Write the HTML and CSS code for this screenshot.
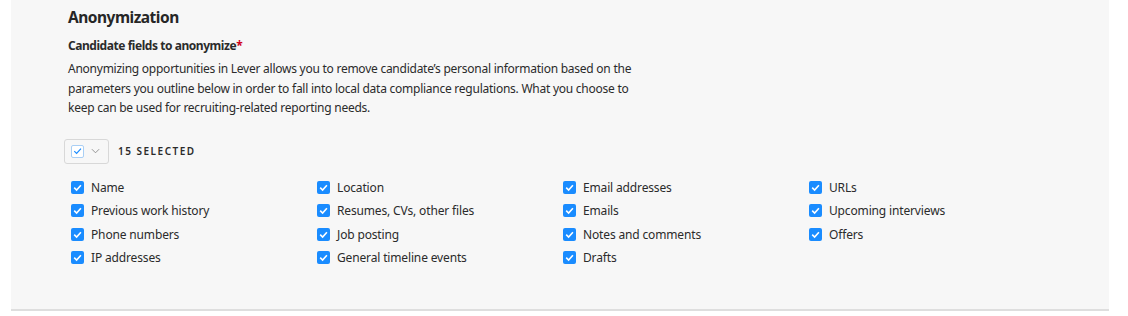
FILE: index.html
```html
<!DOCTYPE html>
<html>
<head>
<meta charset="utf-8">
<link rel="stylesheet" href="styles.css">
</head>
<body>
<section class="panel">
  <h2 class="title">Anonymization</h2>
  <h3 class="label">Candidate fields to anonymize<span class="req">*</span></h3>
  <p class="desc">Anonymizing opportunities in Lever allows you to remove candidate’s personal information based on the parameters you outline below in order to fall into local data compliance regulations. What you choose to keep can be used for recruiting-related reporting needs.</p>
  <div class="bulk">
    <div class="bulk-btn">
      <span class="mini-box"><svg viewBox="0 0 12 12" width="12" height="12"><path d="M2.5 6.2 L5 8.6 L9.8 3.4" fill="none" stroke="#1a8cff" stroke-width="1.3"/></svg></span>
      <svg class="caret" viewBox="0 0 10 6" width="9" height="6"><path d="M1 1 L5 5 L9 1" fill="none" stroke="#8a8a8a" stroke-width="1"/></svg>
    </div>
    <span class="count">15 SELECTED</span>
  </div>
  <div class="grid">
    <label class="item"><svg class="cb" viewBox="0 0 13 13"><rect width="13" height="13" rx="2"/><path d="M3.2 6.7 L5.6 9 L9.9 4.3"/></svg>Name</label>
    <label class="item"><svg class="cb" viewBox="0 0 13 13"><rect width="13" height="13" rx="2"/><path d="M3.2 6.7 L5.6 9 L9.9 4.3"/></svg>Location</label>
    <label class="item"><svg class="cb" viewBox="0 0 13 13"><rect width="13" height="13" rx="2"/><path d="M3.2 6.7 L5.6 9 L9.9 4.3"/></svg>Email addresses</label>
    <label class="item"><svg class="cb" viewBox="0 0 13 13"><rect width="13" height="13" rx="2"/><path d="M3.2 6.7 L5.6 9 L9.9 4.3"/></svg>URLs</label>
    <label class="item"><svg class="cb" viewBox="0 0 13 13"><rect width="13" height="13" rx="2"/><path d="M3.2 6.7 L5.6 9 L9.9 4.3"/></svg>Previous work history</label>
    <label class="item"><svg class="cb" viewBox="0 0 13 13"><rect width="13" height="13" rx="2"/><path d="M3.2 6.7 L5.6 9 L9.9 4.3"/></svg>Resumes, CVs, other files</label>
    <label class="item"><svg class="cb" viewBox="0 0 13 13"><rect width="13" height="13" rx="2"/><path d="M3.2 6.7 L5.6 9 L9.9 4.3"/></svg>Emails</label>
    <label class="item"><svg class="cb" viewBox="0 0 13 13"><rect width="13" height="13" rx="2"/><path d="M3.2 6.7 L5.6 9 L9.9 4.3"/></svg>Upcoming interviews</label>
    <label class="item"><svg class="cb" viewBox="0 0 13 13"><rect width="13" height="13" rx="2"/><path d="M3.2 6.7 L5.6 9 L9.9 4.3"/></svg>Phone numbers</label>
    <label class="item"><svg class="cb" viewBox="0 0 13 13"><rect width="13" height="13" rx="2"/><path d="M3.2 6.7 L5.6 9 L9.9 4.3"/></svg>Job posting</label>
    <label class="item"><svg class="cb" viewBox="0 0 13 13"><rect width="13" height="13" rx="2"/><path d="M3.2 6.7 L5.6 9 L9.9 4.3"/></svg>Notes and comments</label>
    <label class="item"><svg class="cb" viewBox="0 0 13 13"><rect width="13" height="13" rx="2"/><path d="M3.2 6.7 L5.6 9 L9.9 4.3"/></svg>Offers</label>
    <label class="item"><svg class="cb" viewBox="0 0 13 13"><rect width="13" height="13" rx="2"/><path d="M3.2 6.7 L5.6 9 L9.9 4.3"/></svg>IP addresses</label>
    <label class="item"><svg class="cb" viewBox="0 0 13 13"><rect width="13" height="13" rx="2"/><path d="M3.2 6.7 L5.6 9 L9.9 4.3"/></svg>General timeline events</label>
    <label class="item"><svg class="cb" viewBox="0 0 13 13"><rect width="13" height="13" rx="2"/><path d="M3.2 6.7 L5.6 9 L9.9 4.3"/></svg>Drafts</label>
  </div>
</section>
</body>
</html>
```

FILE: styles.css
```css
* { box-sizing: border-box; }
html, body { margin: 0; padding: 0; background: #ffffff; }
body {
  font-family: "Noto Sans", "Open Sans", sans-serif;
  color: #2b2b2b;
  padding: 0 19px 0 11px;
}
.panel {
  background: #f7f7f7;
  border-bottom: 2px solid #dedede;
  padding: 6px 57px 42px 57px;
  height: 311px;
}
.title {
  margin: 0;
  font-size: 15.5px;
  font-weight: 700;
  line-height: 22px;
  color: #262626;
  letter-spacing: -0.5px;
}
.label {
  margin: 10px 0 0;
  font-size: 12px;
  font-weight: 700;
  line-height: 16px;
  letter-spacing: -0.45px;
}
.req { color: #d0021b; }
.desc {
  margin: 5px 0 0;
  width: 580px;
  font-size: 12px;
  line-height: 19.5px;
  letter-spacing: -0.25px;
}
.bulk {
  display: flex;
  align-items: center;
  gap: 9px;
  margin: 21px 0 0 -4px;
}
.bulk-btn {
  width: 45px;
  height: 25px;
  border: 1px solid #d8d8d8;
  border-radius: 3px;
  display: flex;
  align-items: center;
  padding-left: 6px;
  gap: 7px;
}
.mini-box {
  width: 13px;
  height: 13px;
  border: 1px solid #a9cff5;
  background: #fff;
  border-radius: 2px;
  display: flex;
  align-items: center;
  justify-content: center;
}
.count {
  font-size: 10px;
  font-weight: 600;
  letter-spacing: 1.5px;
  color: #2b2b2b;
}
.grid {
  display: grid;
  grid-template-columns: repeat(4, 246px);
  row-gap: 4.6px;
  margin-top: 14px;
  padding-left: 3px;
}
.item {
  display: flex;
  align-items: center;
  gap: 7px;
  font-size: 12px;
  line-height: 19px;
  letter-spacing: -0.15px;
}
.cb {
  width: 13px;
  height: 13px;
  flex: none;
}
.cb rect { fill: #1a8cff; }
.cb path { fill: none; stroke: #ffffff; stroke-width: 1.6; }
```
